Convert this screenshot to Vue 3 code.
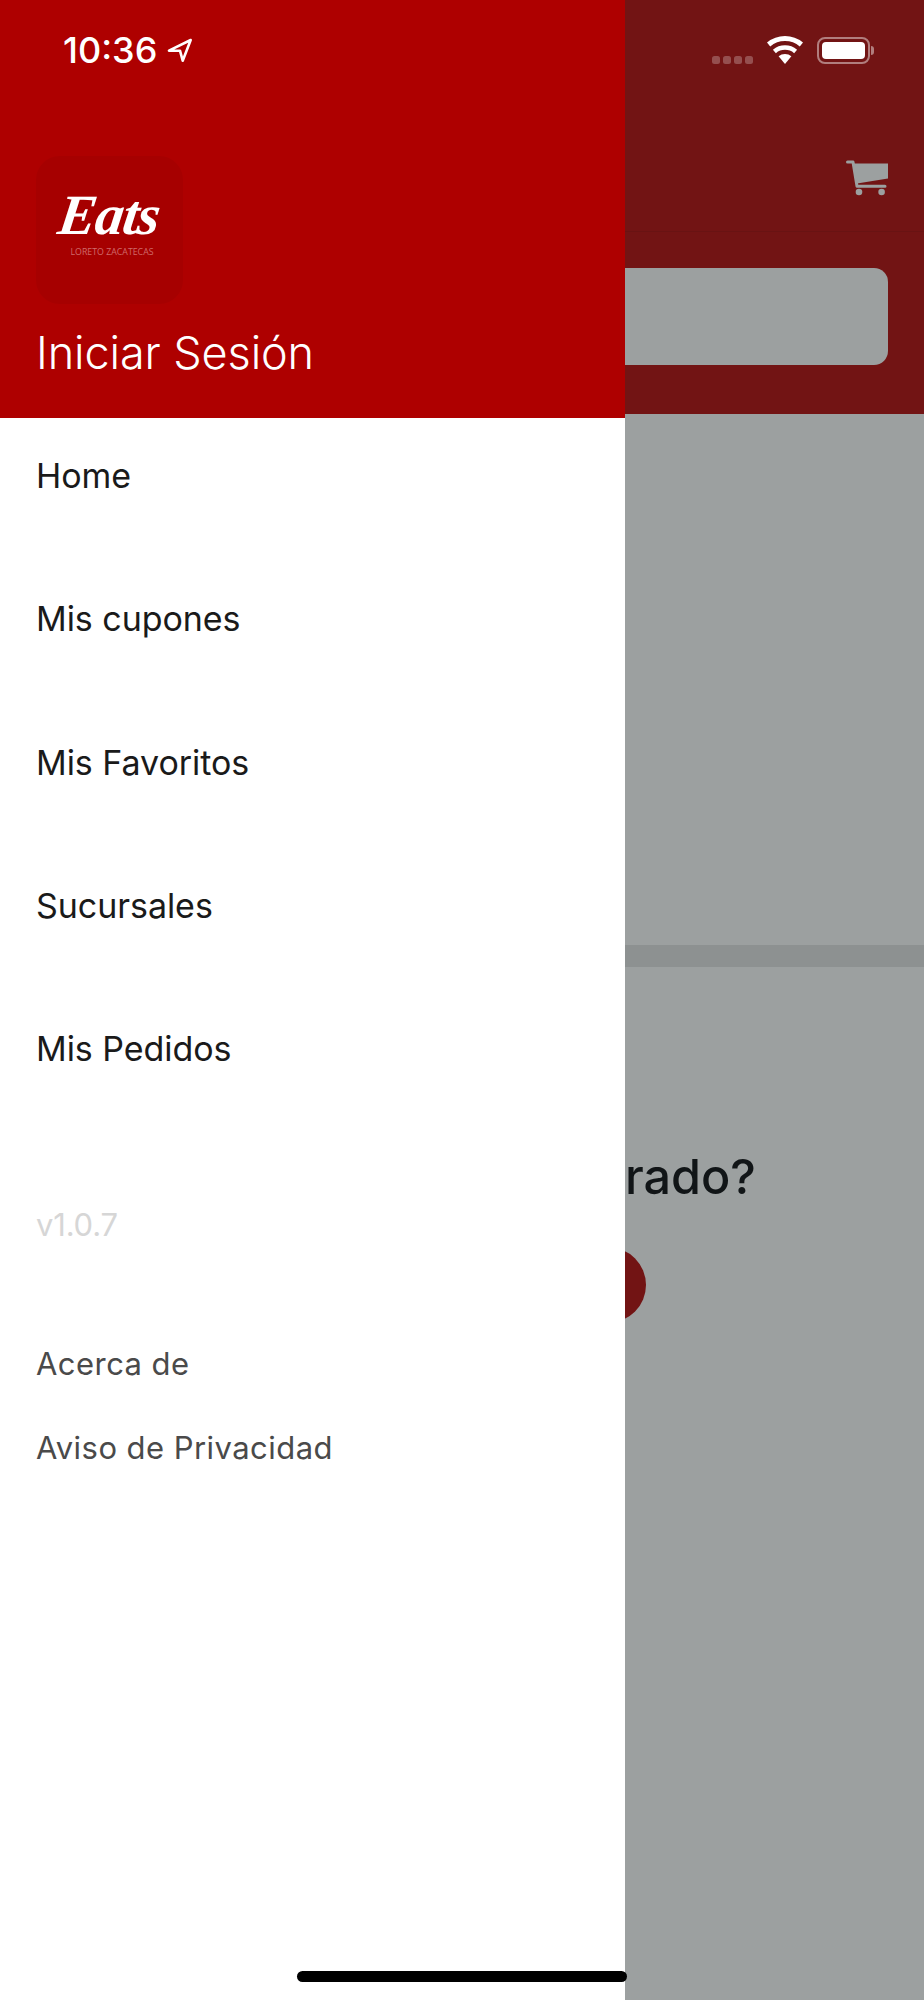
<template>
  <div class="screen">
    <div class="status-bar">
      <div class="status-left">
        <span class="clock">10:36</span>
        <svg class="arrow" width="28" height="28" viewBox="0 0 28 28">
          <path d="M24.7 4 L3 14.7 H14 L16.7 24.7 Z" fill="none" stroke="#fff" stroke-width="2.6" stroke-linejoin="round" />
        </svg>
      </div>
      <div class="status-right">
        <div class="signal">
          <span v-for="n in 4" :key="n" class="dot"></span>
        </div>
        <svg class="wifi" width="36" height="28" viewBox="0 0 36 28">
          <path d="M1.6 8.5 A25.5 25.5 0 0 1 34.4 8.5" fill="none" stroke="#fff" stroke-width="5" />
          <path d="M7.4 15.4 A16.5 16.5 0 0 1 28.6 15.4" fill="none" stroke="#fff" stroke-width="4.6" />
          <path d="M18 28 L11.6 20.3 A10 10 0 0 1 24.4 20.3 Z" fill="#fff" />
        </svg>
        <div class="battery">
          <div class="battery-body"><div class="battery-fill"></div></div>
          <div class="battery-nub"></div>
        </div>
      </div>
    </div>

    <aside class="drawer">
      <header class="drawer-head">
        <div class="logo">
          <span class="logo-name">Eats</span>
          <span class="logo-place">LORETO ZACATECAS</span>
        </div>
        <div class="login">Iniciar Sesión</div>
      </header>
      <nav class="menu">
        <a v-for="item in menu" :key="item" class="menu-item">{{ item }}</a>
      </nav>
      <div class="version">v1.0.7</div>
      <div class="links">
        <a class="link">Acerca de</a>
        <a class="link">Aviso de Privacidad</a>
      </div>
    </aside>

    <main class="page">
      <div class="page-head">
        <div class="toolbar">
          <span class="cart-wrap">
            <svg width="42" height="36" viewBox="0 0 42 36">
              <path d="M1.5 2 H7 L11 26.2 H39" fill="none" stroke="#9ca0a0" stroke-width="3" stroke-linecap="round" stroke-linejoin="round" />
              <path d="M7.5 3.5 H42 V18.5 L11 23.5 Z" fill="#9ca0a0" />
              <circle cx="13" cy="32" r="3.3" fill="#9ca0a0" />
              <circle cx="35.6" cy="32" r="3.3" fill="#9ca0a0" />
            </svg>
          </span>
        </div>
        <div class="search"></div>
      </div>
      <div class="banner"></div>
      <div class="band"></div>
      <h2 class="title">rado?</h2>
      <div class="round-btn"></div>
    </main>

    <div class="home-bar"></div>
  </div>
</template>

<script setup>
const menu = ['Home', 'Mis cupones', 'Mis Favoritos', 'Sucursales', 'Mis Pedidos']
</script>

<style>
html,
body {
  margin: 0;
  background: #fff;
}
</style>

<style scoped>
.screen {
  position: relative;
  display: flex;
  width: 924px;
  height: 2000px;
  overflow: hidden;
  font-family: Inter, "Liberation Sans", sans-serif;
}

/* status bar sits over drawer and page */
.status-bar {
  position: absolute;
  top: 0;
  left: 0;
  right: 0;
  z-index: 3;
  display: flex;
  justify-content: space-between;
  height: 100px;
  padding: 36px 50px 0 63px;
  box-sizing: border-box;
}

.status-left {
  display: flex;
  align-items: flex-start;
  gap: 9px;
}

.clock {
  color: #fff;
  font-size: 36px;
  font-weight: 500;
  line-height: 28px;
}

.status-right {
  display: flex;
  align-items: flex-start;
}

.signal {
  display: flex;
  gap: 3px;
  margin-top: 20px;
  margin-right: 14px;
}

.dot {
  width: 8px;
  height: 8px;
  border-radius: 2.5px;
  background: rgba(255, 255, 255, 0.25);
}

.wifi {
  margin-right: 14px;
}

.battery {
  display: flex;
  align-items: center;
  height: 28px;
}

.battery-body {
  width: 53px;
  height: 27px;
  padding: 3px;
  box-sizing: border-box;
  border: 2px solid rgba(255, 255, 255, 0.45);
  border-radius: 8px;
}

.battery-fill {
  height: 100%;
  background: #fff;
  border-radius: 4px;
}

.battery-nub {
  width: 3px;
  height: 9px;
  margin-left: 1px;
  background: rgba(255, 255, 255, 0.45);
  border-radius: 0 3px 3px 0;
}

.drawer {
  position: relative;
  z-index: 2;
  flex: 0 0 625px;
  background: #fff;
}

.drawer-head {
  height: 418px;
  padding: 156px 0 0 36px;
  box-sizing: border-box;
  background: #ae0000;
}

.logo {
  display: flex;
  flex-direction: column;
  align-items: center;
  width: 147px;
  height: 148px;
  padding-top: 27px;
  box-sizing: border-box;
  background: #a60000;
  border-radius: 24px;
}

.logo-name {
  color: #fff;
  font-family: "Liberation Serif", serif;
  font-size: 57px;
  font-style: italic;
  font-weight: 700;
  line-height: 63px;
  letter-spacing: -1px;
  transform: skewX(-8deg);
}

.logo-place {
  margin: 1px 0 0 5px;
  color: #d06a6a;
  font-family: "Open Sans", sans-serif;
  font-size: 8.8px;
  line-height: 10px;
  white-space: nowrap;
}

.login {
  margin-top: 22px;
  color: #fff;
  font-size: 45px;
  font-weight: 350;
  line-height: 54px;
  letter-spacing: -0.1px;
}

.menu {
  display: flex;
  flex-direction: column;
  gap: 101.3px;
  padding: 37px 0 0 36px;
}

.menu-item {
  color: #1a1a1a;
  font-size: 34px;
  line-height: 42px;
  letter-spacing: -0.05px;
}

.version {
  margin-top: 135px;
  padding-left: 36px;
  color: #d6d6d6;
  font-size: 31px;
  line-height: 40px;
  letter-spacing: -0.2px;
}

.links {
  display: flex;
  flex-direction: column;
  gap: 44px;
  margin-top: 99px;
  padding-left: 36px;
}

.link {
  color: #4a4a4a;
  font-size: 31px;
  line-height: 40px;
  letter-spacing: 0.45px;
}

.page {
  flex: 1;
  min-width: 0;
  background: #9ca0a0;
}

.page-head {
  height: 414px;
  background: #721414;
}

.toolbar {
  display: flex;
  justify-content: flex-end;
  height: 232px;
  padding: 160px 36px 0 0;
  box-sizing: border-box;
  border-bottom: 1px solid #691313;
}

.cart-wrap {
  display: block;
  height: 36px;
}

.search {
  height: 97px;
  margin: 36px 36px 0 0;
  background: #9ca0a0;
  border-radius: 0 14px 14px 0;
}

.banner {
  height: 531px;
}

.band {
  height: 22px;
  background: #8d9191;
}

.title {
  margin: 0;
  padding-top: 178px;
  color: #111517;
  font-size: 48.5px;
  font-weight: 500;
  line-height: 64px;
}

.round-btn {
  width: 76px;
  height: 76px;
  margin: 38px 0 0 -55px;
  background: #721414;
  border-radius: 50%;
}

.home-bar {
  position: absolute;
  left: 297px;
  top: 1971px;
  z-index: 3;
  width: 330px;
  height: 11px;
  background: #000;
  border-radius: 6px;
}
</style>
